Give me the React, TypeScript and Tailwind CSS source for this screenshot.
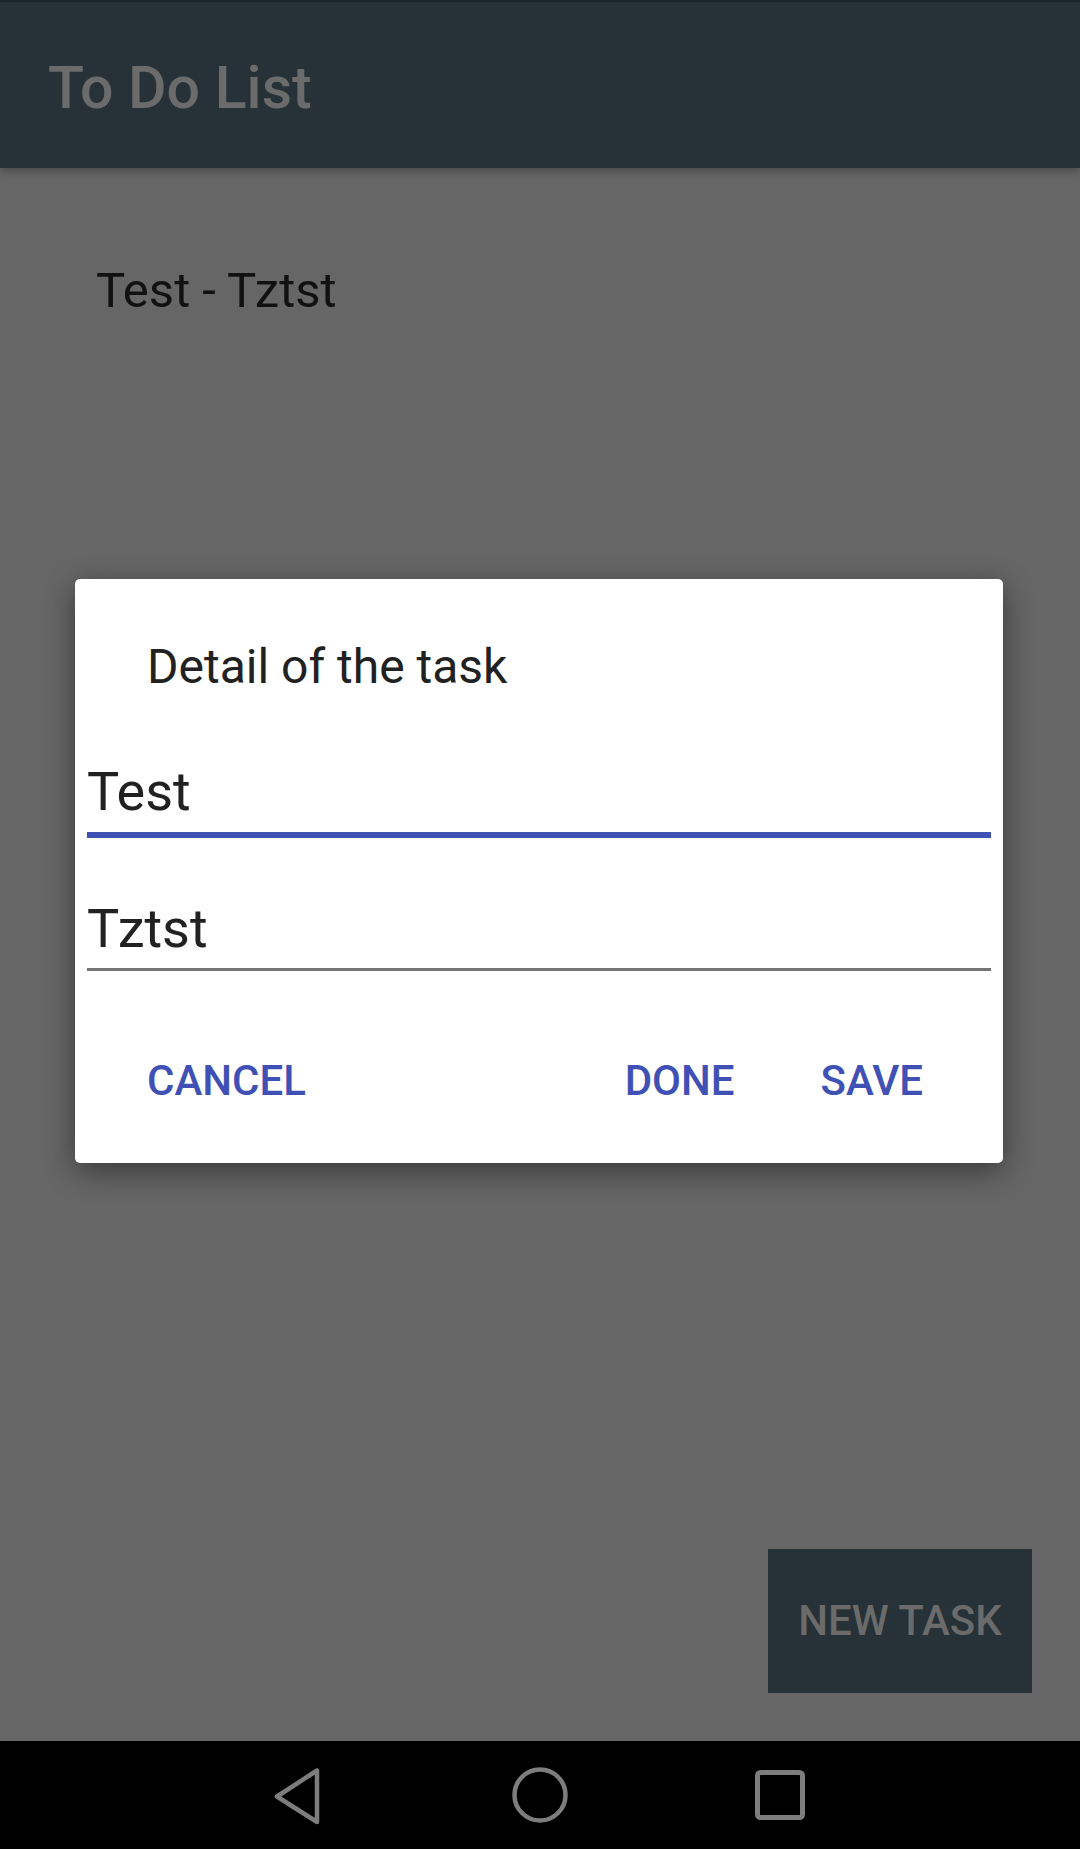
import React from "react";

const font = { fontFamily: "Roboto, 'Noto Sans', sans-serif" };

function NavBar() {
  return (
    <div className="flex h-[108px] items-center justify-center bg-black">
      <div className="flex w-[240px] justify-center">
        <svg width="60" height="60" viewBox="0 0 60 60" fill="none">
          <path
            d="M47 5.5 L47 57 L7 31.5 Z"
            stroke="#7d7d7d"
            strokeWidth="4.5"
            strokeLinejoin="round"
          />
        </svg>
      </div>
      <div className="flex w-[240px] justify-center">
        <svg width="60" height="60" viewBox="0 0 60 60" fill="none">
          <circle cx="30" cy="30" r="25.5" stroke="#7d7d7d" strokeWidth="4.5" />
        </svg>
      </div>
      <div className="flex w-[240px] justify-center">
        <svg width="60" height="60" viewBox="0 0 60 60" fill="none">
          <rect x="7.5" y="7.5" width="45" height="45" rx="3" stroke="#7d7d7d" strokeWidth="5" />
        </svg>
      </div>
    </div>
  );
}

function TaskDialog() {
  return (
    <div className="absolute left-[75px] top-[411px] h-[584px] w-[928px] rounded-[5px] bg-white shadow-[0_8px_30px_rgba(0,0,0,0.45)]">
      <div className="pl-[72px] pt-[64px] text-[48px] leading-none text-[#212121]">
        Detail of the task
      </div>

      <div className="px-[12px]">
        <div className="mt-[74px] text-[54px] leading-none text-[#212121]">Test</div>
        <div className="mt-[13px] h-[6px] bg-[#3f51b5]" />
        <div className="mt-[64px] text-[54px] leading-none text-[#212121]">Tztst</div>
        <div className="mt-[12px] h-[3px] bg-[#757575]" />
      </div>

      <div className="mt-[89px] flex pl-[72px] pr-[80px] text-[42px] font-medium leading-none text-[#3f51b5]">
        <span>CANCEL</span>
        <span className="ml-auto">DONE</span>
        <span className="ml-[86px]">SAVE</span>
      </div>
    </div>
  );
}

export default function App() {
  return (
    <div style={font} className="flex h-[1849px] w-[1080px] flex-col bg-[#666666]">
      <header className="relative z-10 h-[168px] border-t-2 border-[#1b2428] bg-[#263238] pl-[48px] pt-[56px] shadow-[0_3px_8px_rgba(0,0,0,0.3)]">
        <h1 className="text-[59px] font-medium leading-none text-[#6b6b6b]">To Do List</h1>
      </header>

      <main className="relative flex flex-1 flex-col">
        <div className="pl-[96px] pt-[98px] text-[49px] leading-none text-[#111111]">
          Test - Tztst
        </div>

        <div className="mt-auto flex justify-end pb-[48px] pr-[48px]">
          <button className="flex h-[144px] w-[264px] items-center justify-center bg-[#263238] text-[42px] font-medium leading-none text-[#6b6b6b]">
            NEW TASK
          </button>
        </div>

        <TaskDialog />
      </main>

      <NavBar />
    </div>
  );
}
